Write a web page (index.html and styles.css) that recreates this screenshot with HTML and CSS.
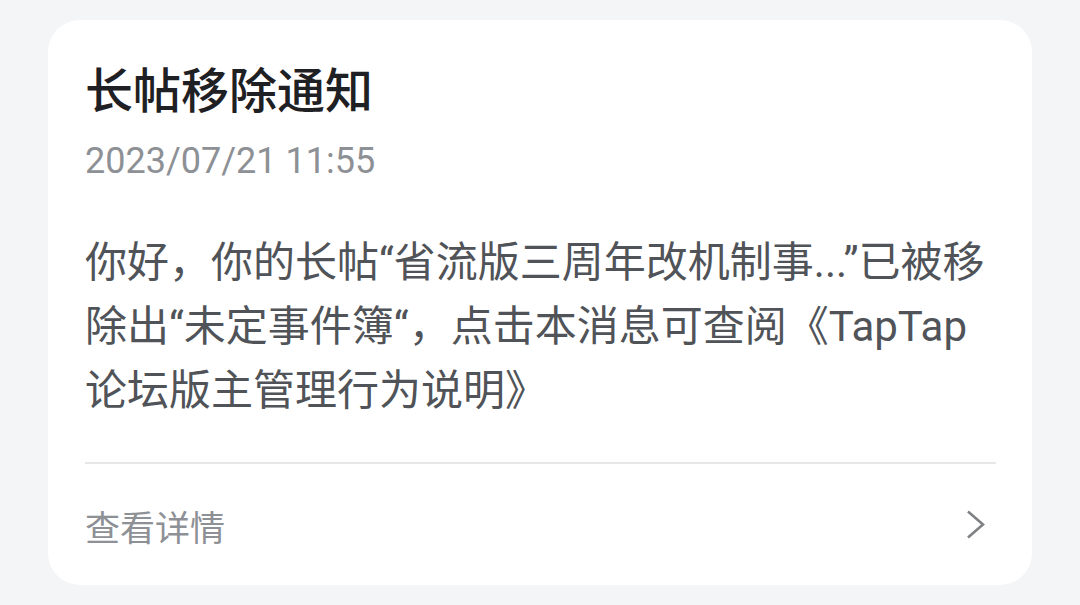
FILE: index.html
```html
<!DOCTYPE html>
<html lang="zh-CN">
<head>
<meta charset="utf-8">
<title>长帖移除通知</title>
<link rel="stylesheet" href="styles.css">
</head>
<body>
<div class="page">
  <div class="card">
    <div class="title">长帖移除通知</div>
    <div class="date">2023/07/21 11:55</div>
    <div class="body">你好，你的长帖“省流版三周年改机制事...”已被移除出“未定事件簿“，点击本消息可查阅《TapTap论坛版主管理行为说明》</div>
    <div class="divider"></div>
    <div class="footer">
      <span class="more">查看详情</span>
      <svg class="chev" width="30" height="32" viewBox="0 0 30 32"><polyline points="5,1.5 20,14.5 5,27.5" fill="none" stroke="#7f8184" stroke-width="2.6"/></svg>
    </div>
  </div>
</div>
</body>
</html>
```
FILE: styles.css
```css
html, body {
  margin: 0;
  padding: 0;
}
body {
  background: #f4f5f7;
  font-family: Roboto, "Noto Sans CJK SC", sans-serif;
  width: 1080px;
  height: 605px;
  overflow: hidden;
}
.page {
  padding: 20px 48px 0 48px;
}
.card {
  background: #ffffff;
  border-radius: 32px;
  height: 565px;
  box-sizing: border-box;
  padding: 44px 36px 0 37px;
  display: flex;
  flex-direction: column;
}
.title {
  font-size: 48px;
  line-height: 56px;
  font-weight: 500;
  color: #1f2023;
}
.date {
  margin-top: 17px;
  font-size: 36px;
  line-height: 48px;
  color: #8d9094;
}
.body {
  margin-top: 46px;
  font-size: 42px;
  line-height: 64px;
  color: #505358;
}
.divider {
  margin-top: 39px;
  height: 2px;
  background: #e7e7e8;
}
.footer {
  margin-top: 29px;
  height: 64px;
  display: flex;
  align-items: center;
  justify-content: space-between;
}
.more {
  font-size: 35px;
  color: #8d9094;
}
.chev {
  display: block;
  margin-right: 3px;
  margin-top: 2px;
}
```
